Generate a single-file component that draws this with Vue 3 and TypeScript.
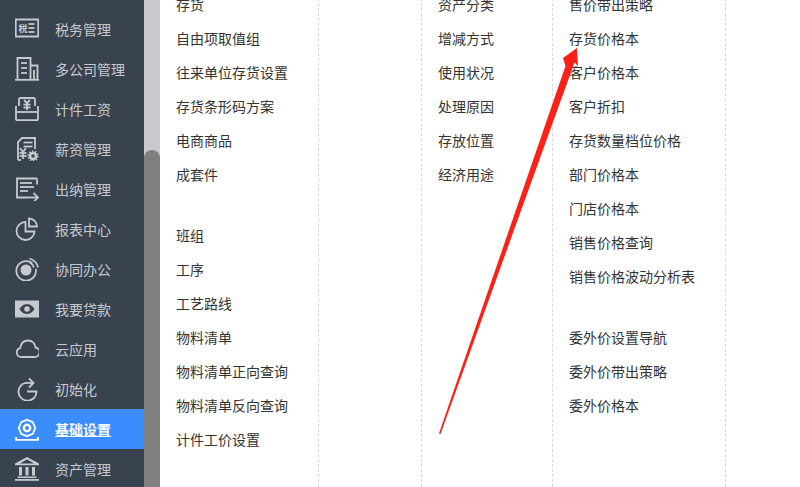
<template>
  <div class="page">
    <!-- 左侧菜单 -->
    <aside class="sidebar">
      <div
        v-for="item in menus"
        :key="item.label"
        class="menu-item"
        :class="{ active: item.active }"
      >
        <svg class="menu-icon" viewBox="0 0 24 24" fill="none" stroke="currentColor" stroke-width="1.8">
          <path v-for="(d, i) in item.paths" :key="i" :d="d" />
          <path v-for="(d, i) in item.solid || []" :key="'s' + i" :d="d" fill="currentColor" fill-rule="evenodd" stroke="none" />
          <circle v-for="(c, i) in item.circles || []" :key="'c' + i" :cx="c[0]" :cy="c[1]" :r="c[2]" :stroke-width="c[3]" :stroke-dasharray="c[4]" />
          <text v-if="item.glyph" class="icon-glyph" x="3.500" y="15" stroke="none" fill="currentColor">{{ item.glyph }}</text>
        </svg>
        <span class="menu-label">{{ item.label }}</span>
      </div>
    </aside>

    <!-- 滚动条 -->
    <div class="scrollbar">
      <div class="thumb" />
    </div>

    <!-- 设置项列 -->
    <main class="columns">
      <div
        v-for="(col, idx) in columns"
        :key="idx"
        class="column"
      >
        <div
          v-for="(group, g) in col"
          :key="g"
          class="group"
        >
          <div
            v-for="text in group"
            :key="text"
            class="link"
          >
            {{ text }}
          </div>
        </div>
      </div>
      <div class="column" />
    </main>

    <!-- 标注箭头 -->
    <svg class="arrow" viewBox="0 0 800 487">
      <path d="M439 433.500L565.500 66 563 58 577 48 578 66 574.500 62.500 440.500 434Z" fill="#fb2018" />
    </svg>
  </div>
</template>

<script setup lang="ts">
interface MenuItem {
  label: string
  paths: string[]
  solid?: string[]
  circles?: number[][]
  glyph?: string
  active?: boolean
}

const menus: MenuItem[] = [
  {
    label: '财务报表',
    paths: ['M5 3v20', 'M10 3v20', 'M14 3v20', 'M19 3v20']
  },
  {
    label: '税务管理',
    glyph: '税',
    paths: ['M.750 2.500h22.500v17H.750z', 'M13.500 7h6', 'M13.500 11h6', 'M13.500 15h6']
  },
  {
    label: '多公司管理',
    paths: ['M0 22.800h24', 'M2.500 22V1h13v21', 'M15.500 8.500h7V22', 'M6 6h6', 'M6 11h6', 'M6 16h6', 'M19 13v9']
  },
  {
    label: '计件工资',
    paths: ['M4 9V2.500Q4 1 5.500 1h13Q20 1 20 2.500V9', 'M1 9v13q0 1.200 1.200 1.200h19.600q1.200 0 1.200-1.200V9', 'M2 15h20', 'M9 3l3 3 3-3', 'M8.500 7.500h7', 'M8.500 10.500h7', 'M12 6v7']
  },
  {
    label: '薪资管理',
    paths: ['M3 23V5l4-4h13v11', 'M3 23h3', 'M8.500 5.500h9', 'M8.500 9.500h9', 'M5 11l3 4 3-4', 'M4.500 16h7', 'M4.500 19h7', 'M8 15v7'],
    circles: [[18, 19, 3, 2.5], [18, 19, 4.800, 1.6, 1.5]]
  },
  {
    label: '出纳管理',
    paths: ['M22 1.500H2v19h10', 'M22 1.500v6', 'M5 6h12', 'M5 10h14', 'M5 14h8', 'M12 20.500h11', 'M18.500 16l4.500 4.500-4.500 4.500']
  },
  {
    label: '报表中心',
    paths: ['M10.500 5a9 9 0 1 0 9 9.500h-9z', 'M14 1.500a8 8 0 0 1 8 8h-8z']
  },
  {
    label: '协同办公',
    paths: ['M17.400 6.300A9.800 9.800 0 1 0 20.800 12', 'M14.500 1.500A12 12 0 0 1 23 10.500', 'M14.500 5.500A8 8 0 0 1 19 10.500'],
    solid: ['M11 7.500a5.500 5.500 0 1 0 0 11 5.500 5.500 0 0 0 0-11z']
  },
  {
    label: '我要贷款',
    paths: [],
    solid: ['M0 3.500h24v17H0zM12 7c-3.600 0-6.400 3-7.500 5 1.100 2 3.900 5 7.500 5s6.400-3 7.500-5c-1.100-2-3.900-5-7.500-5z', 'M12 9.200a2.800 2.800 0 1 0 0 5.600 2.800 2.800 0 0 0 0-5.600z']
  },
  {
    label: '云应用',
    paths: ['M6 20a4.500 4.500 0 0 1-1-8.800C6 6 9.500 3.500 13 3.500c4 0 7 3 7.500 7a4.800 4.800 0 0 1-1.500 9.500z']
  },
  {
    label: '初始化',
    paths: ['M10 6a9 9 0 1 0 11.500 8.500H12', 'M10 6h8', 'M14 1.500l4.500 4.500-4.500 4.500']
  },
  {
    label: '基础设置',
    active: true,
    paths: ['M12 2.800l5.800 2.400 2.400 5.800-2.400 5.800-5.800 2.400-5.800-2.400L3.800 11l2.400-5.800z', 'M1 20v2.800h22V20'],
    circles: [[12, 11, 3.200, 2.4]]
  },
  {
    label: '资产管理',
    paths: [],
    solid: ['M12 0L24 6.500v1.800H0V6.500zM12 2.500L5 6.500h14z', 'M4 10h3v8.500H4z', 'M10.500 10h3v8.500h-3z', 'M17 10h3v8.500h-3z', 'M2.500 19.500h19V21h-19z', 'M0 22h24v1.800H0z']
  }
]

const columns: string[][][] = [
  [
    ['存货', '自由项取值组', '往来单位存货设置', '存货条形码方案', '电商商品', '成套件'],
    ['班组', '工序', '工艺路线', '物料清单', '物料清单正向查询', '物料清单反向查询', '计件工价设置']
  ],
  [],
  [
    ['资产分类', '增减方式', '使用状况', '处理原因', '存放位置', '经济用途']
  ],
  [
    ['售价带出策略', '存货价格本', '客户价格本', '客户折扣', '存货数量档位价格', '部门价格本', '门店价格本', '销售价格查询', '销售价格波动分析表'],
    ['委外价设置导航', '委外价带出策略', '委外价格本']
  ]
]
</script>

<style scoped>
.page {
  display: flex;
  width: 800px;
  height: 487px;
  overflow: hidden;
  position: relative;
  background: #fff;
  font-family: "Liberation Sans", "Noto Sans CJK SC", sans-serif;
  font-size: 14px;
}

.sidebar {
  flex: 0 0 144px;
  margin-top: -31px;
  height: 518px;
  background: #39434f;
  overflow: hidden;
}

.menu-item {
  display: flex;
  align-items: center;
  height: 40px;
  padding-left: 15px;
  color: #c6cacf;
}

.menu-item.active {
  background: #3a8cff;
  color: #fff;
  font-weight: 700;
}

.menu-item.active .menu-label {
  text-decoration: underline;
}

.menu-icon {
  flex: 0 0 24px;
  width: 24px;
  height: 24px;
  margin-right: 16px;
}

.icon-glyph {
  font-size: 9px;
  font-weight: 700;
}

.scrollbar {
  flex: 0 0 16px;
  background: #c8cacf;
  padding-top: 150px;
}

.thumb {
  height: 337px;
  background: #808080;
  border-radius: 8px 8px 0 0;
}

.columns {
  flex: 1;
  display: flex;
  margin-top: -12px;
  height: 499px;
}

.column {
  border-right: 1px dashed #d9d9d9;
  padding-left: 16px;
  flex: 0 0 auto;
  box-sizing: border-box;
}

.column:nth-child(1) {
  width: 159px;
}

.column:nth-child(2) {
  width: 103px;
}

.column:nth-child(3) {
  width: 131px;
}

.column:nth-child(4) {
  width: 173px;
}

.column:nth-child(5) {
  border-right: 0;
}

.group {
  margin-bottom: 27px;
}

.link {
  height: 34px;
  line-height: 34px;
  color: #333;
  white-space: nowrap;
}

.arrow {
  position: absolute;
  left: 0;
  top: 0;
  width: 800px;
  height: 487px;
  pointer-events: none;
}
</style>
